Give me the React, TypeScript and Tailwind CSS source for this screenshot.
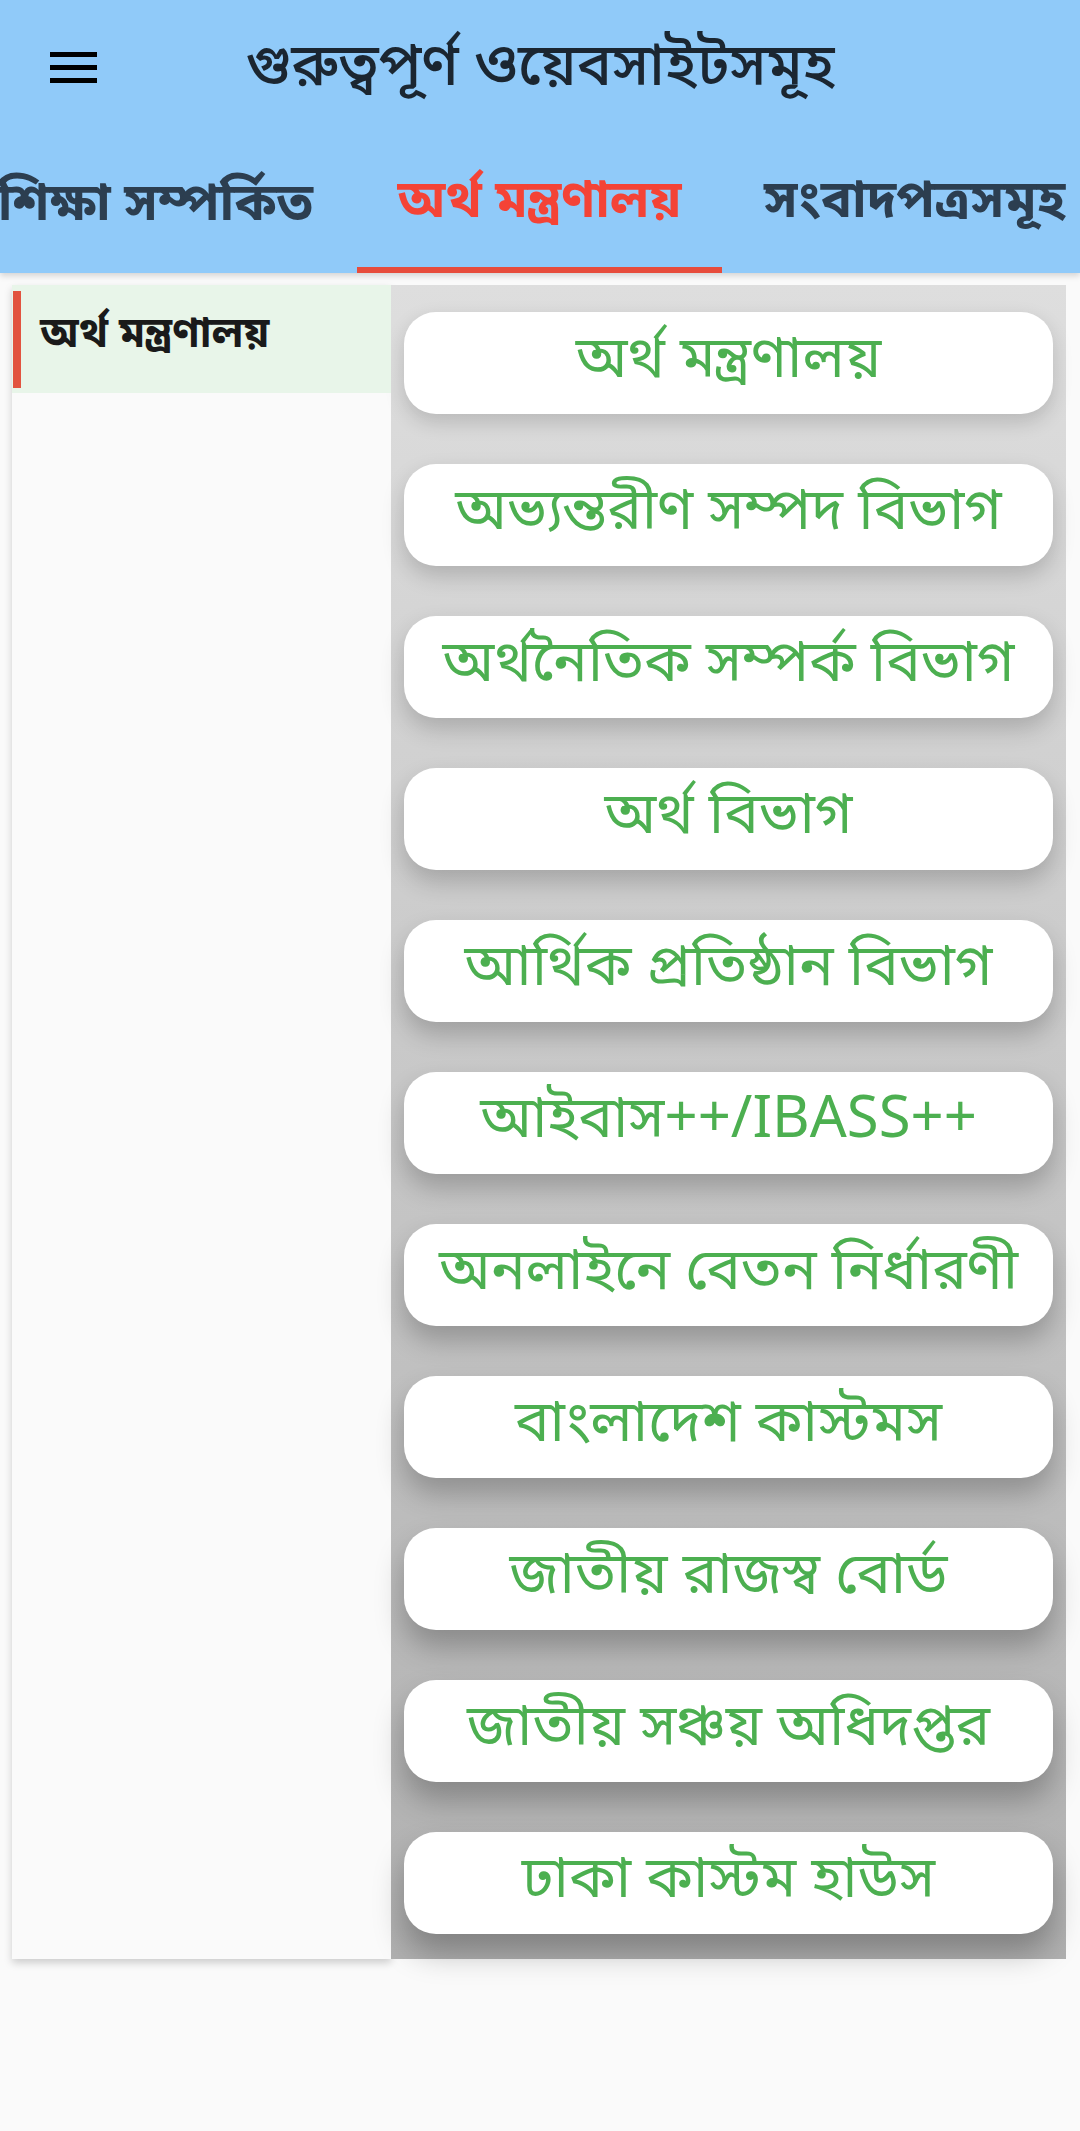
import React from "react";

const items = [
  "অর্থ মন্ত্রণালয়",
  "অভ্যন্তরীণ সম্পদ বিভাগ",
  "অর্থনৈতিক সম্পর্ক বিভাগ",
  "অর্থ বিভাগ",
  "আর্থিক প্রতিষ্ঠান বিভাগ",
  "আইবাস++/IBASS++",
  "অনলাইনে বেতন নির্ধারণী",
  "বাংলাদেশ কাস্টমস",
  "জাতীয় রাজস্ব বোর্ড",
  "জাতীয় সঞ্চয় অধিদপ্তর",
  "ঢাকা কাস্টম হাউস",
];

const shadows = [
  "shadow-[0_8px_20px_rgba(0,0,0,0.16)]",
  "shadow-[0_10px_22px_rgba(0,0,0,0.18)]",
  "shadow-[0_11px_23px_rgba(0,0,0,0.19)]",
  "shadow-[0_12px_24px_rgba(0,0,0,0.2)]",
  "shadow-[0_13px_25px_rgba(0,0,0,0.21)]",
  "shadow-[0_14px_26px_rgba(0,0,0,0.22)]",
  "shadow-[0_15px_27px_rgba(0,0,0,0.23)]",
  "shadow-[0_16px_28px_rgba(0,0,0,0.24)]",
  "shadow-[0_17px_29px_rgba(0,0,0,0.25)]",
  "shadow-[0_18px_30px_rgba(0,0,0,0.26)]",
  "shadow-[0_19px_31px_rgba(0,0,0,0.27)]",
];

export default function App() {
  return (
    <div
      className="min-h-[2131px] w-[1080px] bg-[#fafafa] overflow-hidden"
      style={{ fontFamily: "'Noto Sans Bengali', 'Noto Sans', 'DejaVu Sans', sans-serif" }}
    >
      <header className="h-[273px] bg-[#90caf9] shadow-[0_3px_6px_rgba(0,0,0,0.15)] flex flex-col">
        <div className="h-[140px] grid grid-cols-[140px_1fr_140px] items-center">
          <div className="pl-[50px] flex flex-col gap-[8px] pb-[6px]">
            <span className="block w-[47px] h-[5px] bg-black" />
            <span className="block w-[47px] h-[5px] bg-black" />
            <span className="block w-[47px] h-[5px] bg-black" />
          </div>
          <div className="flex justify-center">
            <span className="text-[59px] leading-none font-medium text-[#1b2631] whitespace-nowrap">
              গুরুত্বপূর্ণ ওয়েবসাইটসমূহ
            </span>
          </div>
          <div />
        </div>
        <div className="flex-1 flex overflow-hidden">
          <div className="w-[357px] shrink-0 flex items-center justify-end pr-[44px] overflow-hidden">
            <span className="text-[52px] font-bold text-[#2c3e50] whitespace-nowrap leading-none">
              শিক্ষা সম্পর্কিত
            </span>
          </div>
          <div className="w-[365px] shrink-0 flex flex-col">
            <div className="flex-1 flex items-center justify-center">
              <span className="text-[52px] font-bold text-[#f44336] whitespace-nowrap leading-none">
                অর্থ মন্ত্রণালয়
              </span>
            </div>
            <div className="h-[6px] bg-[#e74c3c]" />
          </div>
          <div className="flex-1 flex items-center pl-[42px] overflow-hidden pb-[6px]">
            <span className="text-[52px] font-bold text-[#2c3e50] whitespace-nowrap leading-none">
              সংবাদপত্রসমূহ
            </span>
          </div>
        </div>
      </header>

      <main className="flex mt-[12px] pl-[12px]">
        <aside className="w-[379px] shrink-0 bg-[#fafafa] shadow-[0_4px_8px_rgba(0,0,0,0.18)]">
          <div className="h-[108px] bg-[#e8f5e9] flex items-center relative">
            <span className="absolute left-[1px] top-[6px] bottom-[5px] w-[8px] bg-[#e2533f]" />
            <span className="pl-[28px] text-[42px] font-bold text-[#1a1a1a] leading-none pb-[6px]">
              অর্থ মন্ত্রণালয়
            </span>
          </div>
        </aside>
        <section className="w-[675px] shrink-0 bg-gradient-to-b from-[#dedede] to-[#b0b0b0] px-[13px] pt-[27px] pb-[25px] flex flex-col gap-[50px]">
          {items.map((t, i) => (
            <div
              key={i}
              className={`h-[102px] rounded-[32px] bg-white flex items-center justify-center ${shadows[i]}`}
            >
              <span className="text-[58px] text-[#4caf50] leading-none whitespace-nowrap">
                {t}
              </span>
            </div>
          ))}
        </section>
      </main>
    </div>
  );
}
